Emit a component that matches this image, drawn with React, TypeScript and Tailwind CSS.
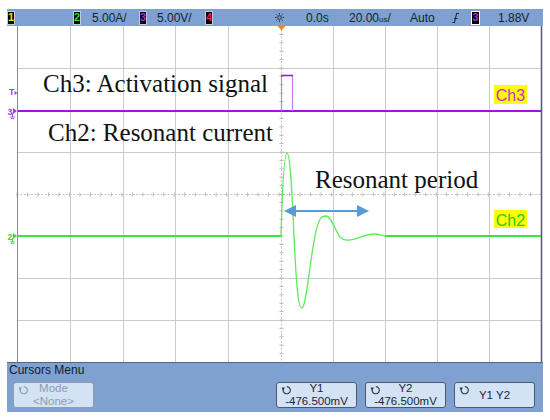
import type React from 'react';

const vGrid = [70, 123, 175, 228, 333, 385, 437, 489];
const hGrid = [68, 152, 278, 320];
const hTicks = Array.from({ length: 50 }, (_, i) => 17 + i * 10.48);
const vTicks = Array.from({ length: 40 }, (_, i) => 26 + i * 8.4);

function ChBox({ n, color }: { n: string; color: string }) {
  return (
    <span
      className={`flex h-[14px] w-[8px] items-center justify-center border border-[#c3ccd6] bg-black text-[11px] font-bold leading-none ${color}`}
    >
      {n}
    </span>
  );
}

function Sun() {
  return (
    <svg width="9" height="9" viewBox="0 0 9 9" className="block">
      <circle cx="4.5" cy="4.5" r="1.8" fill="none" stroke="#1b2838" strokeWidth="0.9" />
      <path
        d="M4.5 0V1.6M4.5 7.4V9M0 4.5H1.6M7.4 4.5H9M1.3 1.3L2.4 2.4M6.6 6.6L7.7 7.7M1.3 7.7L2.4 6.6M6.6 2.4L7.7 1.3"
        stroke="#1b2838"
        strokeWidth="0.9"
      />
    </svg>
  );
}

function Slope() {
  return (
    <svg width="8" height="12" viewBox="0 0 8 12" className="block">
      <path d="M0.5 10.5H2.5L4.6 1.5H7" fill="none" stroke="#1b2838" strokeWidth="1.1" />
      <path d="M2 6.5H5.6" stroke="#1b2838" strokeWidth="1" />
    </svg>
  );
}

function CycleIcon({ color }: { color: string }) {
  return (
    <svg width="11" height="10" viewBox="0 0 11 10" className="absolute left-[4px] top-[2px]">
      <path d="M2.4 3.8A3.6 3.6 0 1 0 5.8 1.6" fill="none" stroke={color} strokeWidth="1.1" />
      <polygon points="0.6,2.4 4,2.6 2,5.4" fill={color} />
    </svg>
  );
}

function SoftKey({
  top,
  bottom,
  dim,
}: {
  top: string;
  bottom?: string;
  dim?: boolean;
}) {
  return (
    <div
      className={`relative flex h-[26px] w-[81px] flex-col items-center justify-center rounded-[3px] border bg-[#d3e2f4] text-[11.5px] leading-[13px] ${
        dim ? 'border-[#8f9cab] text-[#8e9cac]' : 'border-[#4d5964] text-[#1b2735]'
      }`}
    >
      <CycleIcon color={dim ? '#8e9cac' : '#2a3542'} />
      <span>{top}</span>
      {bottom && <span>{bottom}</span>}
    </div>
  );
}

function Plot() {
  return (
    <svg width="536" height="336" viewBox="7 26 536 336" className="block">
      <rect x="7" y="26" width="536" height="336" fill="#ffffff" />
      {vGrid.map((x) => (
        <line key={`v${x}`} x1={x + 0.5} y1="26" x2={x + 0.5} y2="362" stroke="#cbcbcb" />
      ))}
      {hGrid.map((y) => (
        <line key={`h${y}`} x1="17" y1={y + 0.5} x2="541" y2={y + 0.5} stroke="#cbcbcb" />
      ))}
      {/* center axes with ticks */}
      <line x1="17" y1="194.5" x2="541" y2="194.5" stroke="#c4c4c4" strokeDasharray="2 1.5" />
      <line x1="281.5" y1="26" x2="281.5" y2="362" stroke="#c4c4c4" strokeDasharray="2 1.5" />
      {hTicks.map((x) => (
        <line key={`ht${x}`} x1={x} y1="192.5" x2={x} y2="196.5" stroke="#a8a8a8" strokeWidth="0.8" />
      ))}
      {vTicks.map((y) => (
        <line key={`vt${y}`} x1="279.5" y1={y} x2="283.5" y2={y} stroke="#a8a8a8" strokeWidth="0.8" />
      ))}
      <line x1="17.5" y1="26" x2="17.5" y2="362" stroke="#8a8a8a" />
      <line x1="541.5" y1="26" x2="541.5" y2="362" stroke="#4f5877" strokeWidth="1.5" />

      {/* trigger marker */}
      <polygon points="277.5,26 285.5,26 281.5,30.5" fill="#f08a1c" />

      {/* Ch3 trace */}
      <line x1="18" y1="111" x2="541" y2="111" stroke="#9a16e0" strokeWidth="2" />
      <path d="M281.5 111V75.5M292.5 75.5V111" fill="none" stroke="#c27cf2" strokeWidth="1.2" />
      <line x1="281" y1="75.5" x2="293" y2="75.5" stroke="#9a16e0" strokeWidth="1.6" />

      {/* Ch2 trace */}
      <line x1="18" y1="236" x2="281.5" y2="236" stroke="#3ce63c" strokeWidth="2" />
      <path
        d="M281 236C282 200 284 153 287 153C290 153 292 190 294 236C297 300 299 308 302 308C306 308 310 260 315 236C319 216 322 216 326 216C331 216 335 230 340 237C344 241 346 240 349 240C356 240 365 234 375 234C380 234 382 236 386 236"
        fill="none"
        stroke="#5cec5c"
        strokeWidth="1.3"
      />
      <line x1="385" y1="236" x2="541" y2="236" stroke="#3ce63c" strokeWidth="2" />

      {/* resonant period arrow */}
      <line x1="294" y1="211" x2="359" y2="211" stroke="#5b9bd5" strokeWidth="2" />
      <polygon points="284,211 296,205 296,217" fill="#5b9bd5" />
      <polygon points="369,211 357,205 357,217" fill="#5b9bd5" />

      {/* annotations */}
      <g fontFamily="'Liberation Serif', 'Times New Roman', serif" fontSize="25" fill="#111111">
        <text x="43" y="92">Ch3: Activation signal</text>
        <text x="48" y="141">Ch2: Resonant current</text>
        <text x="315" y="188">Resonant period</text>
      </g>

      {/* channel labels */}
      <g fontFamily="'Liberation Sans', Arial, sans-serif" fontSize="16" textAnchor="middle">
        <rect x="494" y="85" width="33" height="19" fill="#ffff00" />
        <text x="510.5" y="101" fill="#cc2ad0">Ch3</text>
        <rect x="494" y="210" width="33" height="18" fill="#ffff00" />
        <text x="510.5" y="225.5" fill="#2fc61c">Ch2</text>
      </g>

      {/* left markers */}
      <g fontFamily="'Liberation Sans', Arial, sans-serif" fontSize="9" fontWeight="bold">
        <text x="9" y="95" fill="#a23ce6">T</text>
        <polygon points="14.5,91 17.5,93 14.5,95" fill="#a23ce6" />
        <text x="7.5" y="114.5" fill="#a23ce6">3</text>
        <polygon points="13,108 17,111 13,114" fill="#a23ce6" />
        <path d="M12.5 113V117M10 117H15M11 118.6H14" stroke="#a23ce6" strokeWidth="0.9" fill="none" />
        <text x="7.5" y="239.5" fill="#3ad83a">2</text>
        <polygon points="13,233 17,236 13,239" fill="#3ad83a" />
        <path d="M12.5 238V242M10 242H15M11 243.6H14" stroke="#3ad83a" strokeWidth="0.9" fill="none" />
      </g>
    </svg>
  );
}

export default function App(): React.ReactElement {
  return (
    <div className="h-[420px] w-[550px] overflow-hidden bg-white pt-[9px] font-['Liberation_Sans',Arial,sans-serif]">
      <div className="ml-[7px] w-[536px]">
        <div className="flex h-[17px] items-center bg-[#7ea1d1] text-[12px] leading-none text-[#142235]">
          <div className="w-[66px]">
            <ChBox n="1" color="text-[#e6e200]" />
          </div>
          <div className="w-[19px]">
            <ChBox n="2" color="text-[#2bdc2b]" />
          </div>
          <div className="w-[47px]">5.00A/</div>
          <div className="w-[18px]">
            <ChBox n="3" color="text-[#9b34d6]" />
          </div>
          <div className="w-[48px]">5.00V/</div>
          <div className="w-[70px]">
            <ChBox n="4" color="text-[#e0235c]" />
          </div>
          <div className="w-[31px]">
            <Sun />
          </div>
          <div className="w-[43px]">0.0s</div>
          <div className="w-[61px]">
            20.00<span className="text-[8px]">us</span>/
          </div>
          <div className="w-[42px]">Auto</div>
          <div className="w-[19px]">
            <Slope />
          </div>
          <div className="w-[27px]">
            <span className="flex h-[14px] w-[9px] items-center justify-center border border-white bg-black text-[11px] font-bold leading-none text-[#9b34d6]">
              3
            </span>
          </div>
          <div className="w-[45px]">1.88V</div>
        </div>

        <div className="h-[336px] w-[536px]">
          <Plot />
        </div>

        <div className="h-[50px] border-t border-[#56677d] bg-[#7ea1d1] text-[12px] text-[#0f1b2b]">
          <div className="h-[14px] pl-[2px] leading-[14px]">Cursors Menu</div>
          <div className="mt-[5px] flex">
            <div className="ml-[6px]">
              <SoftKey top="Mode" bottom="<None>" dim />
            </div>
            <div className="ml-[182px] flex gap-[8px]">
              <SoftKey top="Y1" bottom="-476.500mV" />
              <SoftKey top="Y2" bottom="-476.500mV" />
              <SoftKey top="Y1 Y2" />
            </div>
          </div>
        </div>
      </div>
    </div>
  );
}
